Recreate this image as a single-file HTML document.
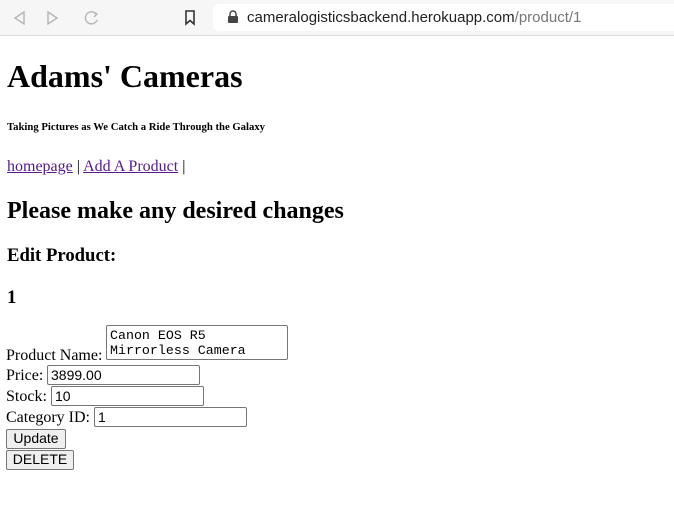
<!DOCTYPE html>
<html><head><style>
body{margin:0;width:674px;height:511px;background:#fff;font-family:"Liberation Serif",serif;position:relative;overflow:hidden}
.a{position:absolute;white-space:nowrap;color:#000}
.bar{position:absolute;left:0;top:0;width:674px;height:35px;background:#f6f6f6;border-bottom:1px solid #dcdcdc}
.url{position:absolute;left:213px;top:4px;width:470px;height:27px;background:#fff;border-radius:6px}
.inp{position:absolute;height:20px;box-sizing:border-box;border:1px solid #767676;border-radius:2px;font:14px "Liberation Sans",sans-serif;padding:1px 3px;line-height:16px;background:#fff}
.btn{position:absolute;height:20px;box-sizing:border-box;border:1px solid #767676;border-radius:2px;background:#efefef;font:14px "Liberation Sans",sans-serif;text-align:center;line-height:17px}
a{color:#551a8b}
</style></head><body>
<div class="bar"></div>
<div class="url"></div>
<svg class="a" style="left:10px;top:9px" width="100" height="18" viewBox="0 0 100 18"><path d="M14 3 L5 9 L14 15 Z" fill="none" stroke="#b5b5b5" stroke-width="1.4"/><path d="M38 3 L47 9 L38 15 Z" fill="none" stroke="#b5b5b5" stroke-width="1.4"/><path d="M86 5 A6 6 0 1 0 87 11" fill="none" stroke="#b5b5b5" stroke-width="1.4"/><path d="M83 3 L87 5 L84 8" fill="none" stroke="#b5b5b5" stroke-width="1.4"/></svg>
<svg class="a" style="left:184px;top:10px" width="12" height="16"><path d="M2 1 H10 V14 L6 10.5 L2 14 Z" fill="none" stroke="#333" stroke-width="1.6"/></svg>
<svg class="a" style="left:227px;top:10px" width="12" height="14"><rect x="1" y="6" width="10" height="7" rx="1" fill="#444"/><path d="M3 6 V4 A3 3 0 0 1 9 4 V6" fill="none" stroke="#444" stroke-width="1.5"/></svg>
<div class="a" style="left:247px;top:9px;font:15px 'Liberation Sans',sans-serif;color:#222">cameralogisticsbackend.herokuapp.com<span style="color:#777">/product/1</span></div>
<div class="a" style="left:7px;top:58px;font-size:32px;font-weight:bold">Adams' Cameras</div>
<div class="a" style="left:7px;top:121px;font-size:10.7px;font-weight:bold">Taking Pictures as We Catch a Ride Through the Galaxy</div>
<div class="a" style="left:7px;top:158px;font-size:16px"><a href="#">homepage</a> | <a href="#">Add A Product</a> |</div>
<div class="a" style="left:7px;top:198px;font-size:24px;font-weight:bold">Please make any desired changes</div>
<div class="a" style="left:7px;top:245px;font-size:18.7px;font-weight:bold">Edit Product:</div>
<div class="a" style="left:7px;top:287px;font-size:18.7px;font-weight:bold">1</div>
<div class="a" style="left:6px;top:347px;font-size:16px">Product Name:</div>
<div class="inp" style="left:106px;top:325px;width:182px;height:35px;font:13.3px 'Liberation Mono',monospace;line-height:15px;padding:2px 3px">Canon EOS R5<br>Mirrorless Camera</div>
<div class="a" style="left:6px;top:367px;font-size:16px">Price:</div>
<div class="inp" style="left:47px;top:365px;width:153px">3899.00</div>
<div class="a" style="left:6px;top:388px;font-size:16px">Stock:</div>
<div class="inp" style="left:51px;top:386px;width:153px">10</div>
<div class="a" style="left:6px;top:409px;font-size:16px">Category ID:</div>
<div class="inp" style="left:94px;top:407px;width:153px">1</div>
<div class="btn" style="left:6px;top:429px;width:60px">Update</div>
<div class="btn" style="left:6px;top:450px;width:68px">DELETE</div>
</body></html>
